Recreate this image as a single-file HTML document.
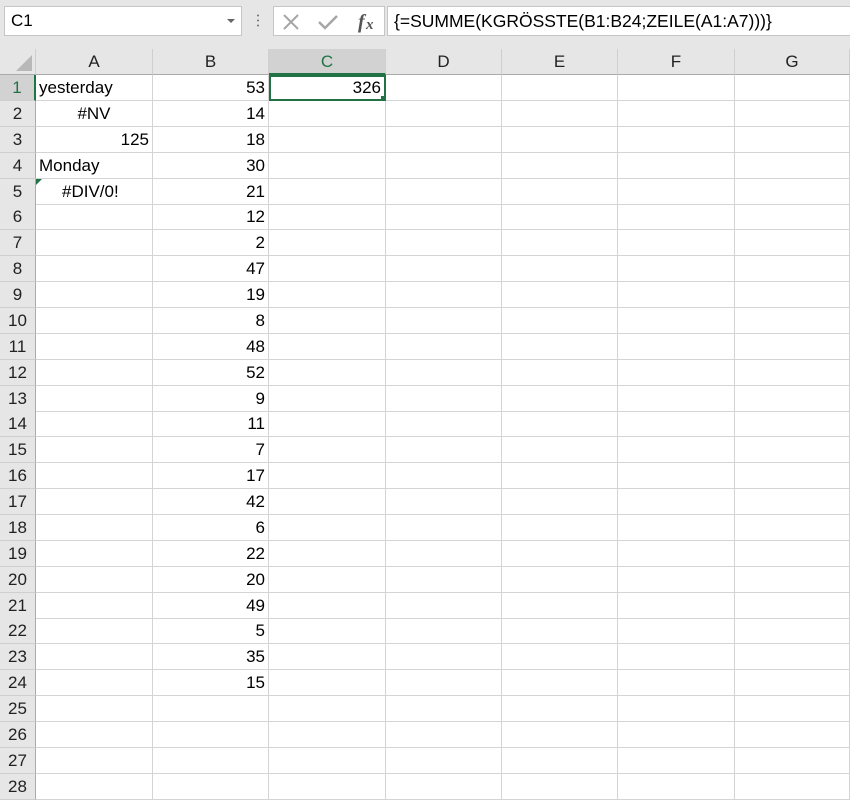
<!DOCTYPE html>
<html><head><meta charset="utf-8"><style>
*{box-sizing:border-box;margin:0;padding:0}
body{width:850px;height:799px;overflow:hidden;background:#fff;font-family:"Liberation Sans",sans-serif;font-size:17px;color:#000;position:relative}
.top{position:absolute;left:0;top:0;width:850px;height:75px;background:#e6e6e6}
.nb{position:absolute;left:4px;top:6px;width:238px;height:30px;background:#fff;border:1px solid #c6c6c6;padding:4px 0 0 6px;font-size:17px}
.nb:after{content:"";position:absolute;right:6px;top:12px;border-left:4px solid transparent;border-right:4px solid transparent;border-top:4px solid #666}
.dots{position:absolute;left:257px;top:13px;width:2px;height:14px;background:radial-gradient(circle,#777 0.9px,transparent 1.1px) 0 0/2px 5px}
.fi{position:absolute;left:273px;top:6px;width:112px;height:30px;background:#fff;border:1px solid #c6c6c6}
.fb{position:absolute;left:387px;top:6px;width:470px;height:30px;background:#fff;border:1px solid #c6c6c6;padding:4px 0 0 6px;font-size:17.5px}
.r{position:absolute;left:0;width:850px;height:26px;display:flex}
.c{height:100%;border-right:1px solid #d4d4d4;border-bottom:1px solid #d4d4d4;line-height:25px;padding:0 3px;white-space:nowrap;overflow:hidden}
.h{width:36px;background:#e6e6e6;border-right:1px solid #ababab;border-bottom:1px solid #cfcfcf;text-align:center;color:#222;font-size:17px;line-height:25px}
.a{width:117px}.b{width:116px;text-align:right}.cc{width:117px;text-align:right}.d{width:116px}.e{width:116px}.f{width:117px}.g{width:115px}
.hd{position:absolute;top:49px;left:0;height:26px;display:flex}
.hd div{height:26px;background:#e6e6e6;border-right:1px solid #cfcfcf;border-bottom:1px solid #ababab;text-align:center;line-height:26px;color:#222}
</style></head><body>
<div class="top"></div>
<div class="nb">C1</div>
<div class="dots"></div>
<div class="fi">
<svg width="112" height="30" style="position:absolute;left:0;top:0">
<path d="M10 8 L24 22 M24 8 L10 22" stroke="#a6a6a6" stroke-width="2" fill="none"/>
<path d="M45 15 L51 21 L63 9" stroke="#a6a6a6" stroke-width="2.5" fill="none"/>
<text x="84" y="21" font-family="Liberation Serif" font-style="italic" font-weight="bold" font-size="20" fill="#555">f</text>
<text x="92" y="22" font-family="Liberation Serif" font-style="italic" font-weight="bold" font-size="15" fill="#555">x</text>
</svg></div>
<div class="fb">{=SUMME(KGRÖSSTE(B1:B24;ZEILE(A1:A7)))}</div>
<div class="hd">
<div style="width:36px;position:relative"><span style="position:absolute;right:3px;bottom:3px;border-left:16px solid transparent;border-bottom:16px solid #b8b8b8"></span></div>
<div style="width:117px">A</div><div style="width:116px">B</div>
<div style="width:117px;background:#d2d2d2;color:#217346;border-bottom:2px solid #217346">C</div>
<div style="width:116px">D</div><div style="width:116px">E</div><div style="width:117px">F</div><div style="width:115px">G</div>
</div>

<div class="r" style="top:75px"><div class="c h" style="background:#d2d2d2;color:#217346;border-right:2px solid #217346">1</div><div class="c a">yesterday</div><div class="c b">53</div><div class="c cc" style="border:2px solid #217346;line-height:22px;position:relative">326<span style="position:absolute;right:-2px;bottom:-2px;width:6px;height:6px;background:#217346;border:1px solid #fff"></span></div><div class="c d"></div><div class="c e"></div><div class="c f"></div><div class="c g"></div></div>
<div class="r" style="top:100.875px"><div class="c h">2</div><div class="c a" style="text-align:center">#NV</div><div class="c b">14</div><div class="c cc"></div><div class="c d"></div><div class="c e"></div><div class="c f"></div><div class="c g"></div></div>
<div class="r" style="top:126.75px"><div class="c h">3</div><div class="c a" style="text-align:right">125</div><div class="c b">18</div><div class="c cc"></div><div class="c d"></div><div class="c e"></div><div class="c f"></div><div class="c g"></div></div>
<div class="r" style="top:152.625px"><div class="c h">4</div><div class="c a">Monday</div><div class="c b">30</div><div class="c cc"></div><div class="c d"></div><div class="c e"></div><div class="c f"></div><div class="c g"></div></div>
<div class="r" style="top:178.5px"><div class="c h">5</div><div class="c a" style="padding-left:26px;position:relative"><span style="position:absolute;left:0;top:0;border-right:6px solid transparent;border-top:6px solid #217346"></span>#DIV/0!</div><div class="c b">21</div><div class="c cc"></div><div class="c d"></div><div class="c e"></div><div class="c f"></div><div class="c g"></div></div>
<div class="r" style="top:204.375px"><div class="c h">6</div><div class="c a"></div><div class="c b">12</div><div class="c cc"></div><div class="c d"></div><div class="c e"></div><div class="c f"></div><div class="c g"></div></div>
<div class="r" style="top:230.25px"><div class="c h">7</div><div class="c a"></div><div class="c b">2</div><div class="c cc"></div><div class="c d"></div><div class="c e"></div><div class="c f"></div><div class="c g"></div></div>
<div class="r" style="top:256.125px"><div class="c h">8</div><div class="c a"></div><div class="c b">47</div><div class="c cc"></div><div class="c d"></div><div class="c e"></div><div class="c f"></div><div class="c g"></div></div>
<div class="r" style="top:282px"><div class="c h">9</div><div class="c a"></div><div class="c b">19</div><div class="c cc"></div><div class="c d"></div><div class="c e"></div><div class="c f"></div><div class="c g"></div></div>
<div class="r" style="top:307.875px"><div class="c h">10</div><div class="c a"></div><div class="c b">8</div><div class="c cc"></div><div class="c d"></div><div class="c e"></div><div class="c f"></div><div class="c g"></div></div>
<div class="r" style="top:333.75px"><div class="c h">11</div><div class="c a"></div><div class="c b">48</div><div class="c cc"></div><div class="c d"></div><div class="c e"></div><div class="c f"></div><div class="c g"></div></div>
<div class="r" style="top:359.625px"><div class="c h">12</div><div class="c a"></div><div class="c b">52</div><div class="c cc"></div><div class="c d"></div><div class="c e"></div><div class="c f"></div><div class="c g"></div></div>
<div class="r" style="top:385.5px"><div class="c h">13</div><div class="c a"></div><div class="c b">9</div><div class="c cc"></div><div class="c d"></div><div class="c e"></div><div class="c f"></div><div class="c g"></div></div>
<div class="r" style="top:411.375px"><div class="c h">14</div><div class="c a"></div><div class="c b">11</div><div class="c cc"></div><div class="c d"></div><div class="c e"></div><div class="c f"></div><div class="c g"></div></div>
<div class="r" style="top:437.25px"><div class="c h">15</div><div class="c a"></div><div class="c b">7</div><div class="c cc"></div><div class="c d"></div><div class="c e"></div><div class="c f"></div><div class="c g"></div></div>
<div class="r" style="top:463.125px"><div class="c h">16</div><div class="c a"></div><div class="c b">17</div><div class="c cc"></div><div class="c d"></div><div class="c e"></div><div class="c f"></div><div class="c g"></div></div>
<div class="r" style="top:489px"><div class="c h">17</div><div class="c a"></div><div class="c b">42</div><div class="c cc"></div><div class="c d"></div><div class="c e"></div><div class="c f"></div><div class="c g"></div></div>
<div class="r" style="top:514.875px"><div class="c h">18</div><div class="c a"></div><div class="c b">6</div><div class="c cc"></div><div class="c d"></div><div class="c e"></div><div class="c f"></div><div class="c g"></div></div>
<div class="r" style="top:540.75px"><div class="c h">19</div><div class="c a"></div><div class="c b">22</div><div class="c cc"></div><div class="c d"></div><div class="c e"></div><div class="c f"></div><div class="c g"></div></div>
<div class="r" style="top:566.625px"><div class="c h">20</div><div class="c a"></div><div class="c b">20</div><div class="c cc"></div><div class="c d"></div><div class="c e"></div><div class="c f"></div><div class="c g"></div></div>
<div class="r" style="top:592.5px"><div class="c h">21</div><div class="c a"></div><div class="c b">49</div><div class="c cc"></div><div class="c d"></div><div class="c e"></div><div class="c f"></div><div class="c g"></div></div>
<div class="r" style="top:618.375px"><div class="c h">22</div><div class="c a"></div><div class="c b">5</div><div class="c cc"></div><div class="c d"></div><div class="c e"></div><div class="c f"></div><div class="c g"></div></div>
<div class="r" style="top:644.25px"><div class="c h">23</div><div class="c a"></div><div class="c b">35</div><div class="c cc"></div><div class="c d"></div><div class="c e"></div><div class="c f"></div><div class="c g"></div></div>
<div class="r" style="top:670.125px"><div class="c h">24</div><div class="c a"></div><div class="c b">15</div><div class="c cc"></div><div class="c d"></div><div class="c e"></div><div class="c f"></div><div class="c g"></div></div>
<div class="r" style="top:696px"><div class="c h">25</div><div class="c a"></div><div class="c b"></div><div class="c cc"></div><div class="c d"></div><div class="c e"></div><div class="c f"></div><div class="c g"></div></div>
<div class="r" style="top:721.875px"><div class="c h">26</div><div class="c a"></div><div class="c b"></div><div class="c cc"></div><div class="c d"></div><div class="c e"></div><div class="c f"></div><div class="c g"></div></div>
<div class="r" style="top:747.75px"><div class="c h">27</div><div class="c a"></div><div class="c b"></div><div class="c cc"></div><div class="c d"></div><div class="c e"></div><div class="c f"></div><div class="c g"></div></div>
<div class="r" style="top:773.625px"><div class="c h">28</div><div class="c a"></div><div class="c b"></div><div class="c cc"></div><div class="c d"></div><div class="c e"></div><div class="c f"></div><div class="c g"></div></div>
</body></html>
